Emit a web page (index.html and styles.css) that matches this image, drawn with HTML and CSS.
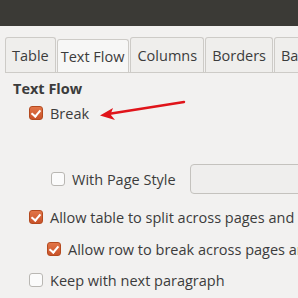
FILE: index.html
```html
<!DOCTYPE html>
<html lang="en">
<head>
    <meta charset="UTF-8" />
    <title>Table Properties - Text Flow</title>
    <link rel="stylesheet" href="styles.css">
</head>
<body>
    <div class="titlebar"></div>
    <div class="dialog">
        <div class="tabs">
            <div class="tab">Table</div>
            <div class="tab active">Text Flow</div>
            <div class="tab">Columns</div>
            <div class="tab">Borders</div>
            <div class="tab">Background</div>
        </div>
        <div class="page">
            <h2 class="section-title">Text Flow</h2>
            <div class="row break-row">
                <span class="check checked"></span>
                <span class="label">Break</span>
            </div>
            <div class="row style-row">
                <span class="check"></span>
                <span class="label">With Page Style</span>
                <div class="combo"></div>
            </div>
            <div class="row split-row">
                <span class="check checked"></span>
                <span class="label">Allow table to split across pages and columns</span>
            </div>
            <div class="row rowbreak-row">
                <span class="check checked"></span>
                <span class="label">Allow row to break across pages and columns</span>
            </div>
            <div class="row keep-row">
                <span class="check"></span>
                <span class="label">Keep with next paragraph</span>
            </div>
            <svg class="arrow" width="90" height="24" viewBox="0 0 90 24">
                <line x1="86" y1="3" x2="10" y2="15" stroke="#e0141a" stroke-width="2.4" stroke-linecap="round" />
                <path d="M2 16.5 L15 9 L12.5 15.5 L17 21 Z" fill="#e0141a" />
            </svg>
        </div>
    </div>
</body>
</html>
```

FILE: styles.css
```css
:root {
    --bg: #f2f1f0;
    --text: #3c3c3c;
    --tab-border: #cdcbc7;
}

body {
    margin: 0;
    background-color: var(--bg);
    color: var(--text);
    font-family: 'Open Sans', 'DejaVu Sans', sans-serif;
    font-size: 14.5px;
    width: 298px;
    height: 298px;
    overflow: hidden;
}

.titlebar {
    height: 26px;
    background-color: #3b3a36;
}

.dialog {
    padding: 11px 0 0 5px;
}

.tabs {
    display: flex;
    height: 35px;
    white-space: nowrap;
    overflow: hidden;
    border-bottom: 1px solid var(--tab-border);
}

.tab {
    flex: none;
    display: flex;
    align-items: center;
    padding: 1px 6px 0 6px;
    margin-right: 1px;
    border: 1px solid var(--tab-border);
    border-bottom: none;
    border-radius: 3px 3px 0 0;
    background-color: #efeeec;
}

.tab.active {
    margin-top: 2px;
    margin-bottom: -1px;
    padding: 0 4px 0 3px;
    background-color: #f7f7f6;
}

.page {
    position: relative;
    padding: 6px 0 0 8px;
}

.section-title {
    margin: 0;
    font-size: 14.5px;
    font-weight: bold;
    line-height: 20px;
}

.row {
    display: flex;
    align-items: center;
    white-space: nowrap;
    height: 20px;
}

.check {
    flex: none;
    width: 12px;
    height: 12px;
    border: 1px solid #b9b7b3;
    border-radius: 3px;
    background-color: #fbfbfb;
    margin-right: 7px;
}

.check.checked {
    border-color: #b44a1f;
    background: linear-gradient(#e27547, #c9532a);
    position: relative;
}

.check.checked::after {
    content: "";
    position: absolute;
    left: 2.5px;
    top: 1px;
    width: 4px;
    height: 7px;
    border: solid #fff;
    border-width: 0 2px 2px 0;
    transform: rotate(40deg);
}

.break-row {
    margin: 4px 0 0 16px;
}

.style-row {
    margin: 40px 0 0 38px;
    height: 32px;
}

.combo {
    flex: none;
    width: 140px;
    height: 28px;
    margin-left: 14px;
    border: 1px solid #c4c2be;
    border-radius: 4px;
    background-color: #efeeed;
}

.split-row {
    margin: 12px 0 0 16px;
}

.rowbreak-row {
    margin: 12px 0 0 34px;
}

.keep-row {
    margin: 11px 0 0 16px;
}

.arrow {
    position: absolute;
    left: 93px;
    top: 26px;
}
```
